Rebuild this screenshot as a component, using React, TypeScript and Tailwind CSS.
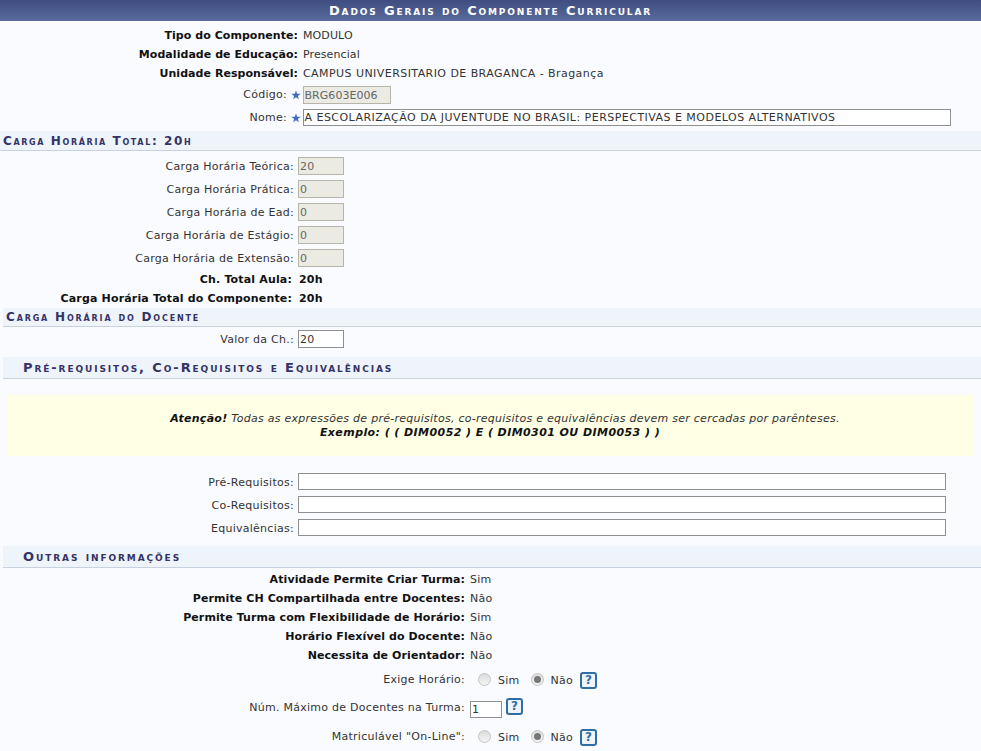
const font = "font-['DejaVu_Sans',Verdana,sans-serif]";

function Star() {
  return (
    <svg viewBox="0 0 10 10" className="w-[10px] h-[10px] shrink-0">
      <path d="M5 0.5 L6.2 3.7 L9.6 3.8 L6.9 5.9 L7.9 9.3 L5 7.3 L2.1 9.3 L3.1 5.9 L0.4 3.8 L3.8 3.7 Z" fill="#3f70c0" />
    </svg>
  );
}

function Help() {
  return (
    <span className="block w-[17px] h-[17px] border-2 border-[#2f6ea5] rounded-[3px] bg-[#eef4fa] text-[#2f6ea5] text-[12px] font-bold leading-[13px] text-center">
      ?
    </span>
  );
}

function Radio({ checked }: { checked?: boolean }) {
  return (
    <span className="w-[13px] h-[13px] rounded-full border border-[#c4c4c4] bg-gradient-to-b from-[#dcdcdc] to-[#f4f4f4] flex items-center justify-center shrink-0">
      {checked && <span className="w-[7px] h-[7px] rounded-full bg-[#777777]" />}
    </span>
  );
}

function Section({ title, className }: { title: string; className: string }) {
  return (
    <div className={`bg-[#eff3fa] border-b border-[#c8d1e0] flex items-center font-bold text-[#333366] [font-variant:small-caps] ${className}`}>
      {title}
    </div>
  );
}

function InfoRow({ label, value, wide }: { label: string; value: string; wide?: boolean }) {
  return (
    <div className="flex h-[19px] items-center pt-[2px]">
      <div className="w-[298px] text-right font-bold text-[#111111] tracking-[0.05px]">{label}</div>
      <div className={wide ? "ml-[5px] tracking-[0.44px]" : "ml-[5px] tracking-[0.1px]"}>{value}</div>
    </div>
  );
}

function Disabled({ value }: { value: string }) {
  return (
    <div className="w-[46px] h-[18px] border border-[#b5b5a8] bg-[#ebebe4] text-[#666666] pl-[1px] leading-[18px] tracking-[0.3px]">{value}</div>
  );
}

function HourRow({ label, value }: { label: string; value: string }) {
  return (
    <div className="flex h-[23px] items-center">
      <div className="w-[294px] text-right tracking-[0.27px] pt-[4px]">{label}</div>
      <div className="ml-[4px]"><Disabled value={value} /></div>
    </div>
  );
}

function TotalRow({ label, value }: { label: string; value: string }) {
  return (
    <div className="flex h-[19px] items-center font-bold text-[#111111] tracking-[0.16px] pt-[2px]">
      <div className="w-[292px] text-right">{label}</div>
      <div className="ml-[7px]">{value}</div>
    </div>
  );
}

function TextRow({ label }: { label: string }) {
  return (
    <div className="flex h-[23px] items-center">
      <div className="w-[294px] text-right tracking-[0.27px] pt-[3px]">{label}</div>
      <div className="ml-[4px] w-[648px] h-[17px] border border-[#8f8f8f] bg-white" />
    </div>
  );
}

function OtherRow({ label, value }: { label: string; value: string }) {
  return (
    <div className="flex h-[19px] items-center pt-[2px]">
      <div className="w-[465px] text-right font-bold text-[#111111] tracking-[0.1px]">{label}</div>
      <div className="ml-[5px] tracking-[0.27px]">{value}</div>
    </div>
  );
}

function RadioRow({ label, className }: { label: string; className: string }) {
  return (
    <div className={`flex items-center tracking-[0.27px] ${className}`}>
      <div className="w-[465px] text-right pt-[1px]">{label}</div>
      <div className="ml-[13px]"><Radio /></div>
      <span className="ml-[7px] mt-[4px]">Sim</span>
      <div className="ml-[11px]"><Radio checked /></div>
      <span className="ml-[7px] mt-[4px]">Não</span>
      <div className="ml-[7px] mt-[1px]"><Help /></div>
    </div>
  );
}

export default function App() {
  return (
    <div className={`${font} w-[981px] h-[751px] overflow-hidden bg-[#fafbff] text-[11px] text-[#333333]`}>
      <div className="h-[21px] bg-gradient-to-b from-[#3f4d80] to-[#5a6a9c] text-white font-bold text-[13px] tracking-[1.85px] [font-variant:small-caps] flex items-center justify-center">
        Dados Gerais do Componente Curricular
      </div>

      <div className="pt-[5px]">
        <InfoRow label="Tipo do Componente:" value="MODULO" />
        <InfoRow label="Modalidade de Educação:" value="Presencial" />
        <InfoRow label="Unidade Responsável:" value="CAMPUS UNIVERSITARIO DE BRAGANCA - Bragança" wide />
        <div className="flex h-[23px] items-center">
          <div className="w-[287px] text-right tracking-[0.27px] pt-[2px]">Código:</div>
          <div className="ml-[4px]"><Star /></div>
          <div className="ml-[2px] w-[88px] h-[18px] border border-[#b5b5a8] bg-[#ebebe4] text-[#666666] pl-[0.5px] leading-[17px] tracking-[0.05px]">BRG603E006</div>
        </div>
        <div className="flex h-[23px] items-center">
          <div className="w-[287px] text-right tracking-[0.27px] pt-[2px]">Nome:</div>
          <div className="ml-[4px]"><Star /></div>
          <div className="ml-[2px] w-[648px] h-[17px] border border-[#8f8f8f] bg-white pl-[0.5px] leading-[16px] tracking-[0.47px]">A ESCOLARIZAÇÃO DA JUVENTUDE NO BRASIL: PERSPECTIVAS E MODELOS ALTERNATIVOS</div>
        </div>
      </div>

      <Section title="Carga Horária Total: 20h" className="h-[20px] mt-[2px] pl-[3px] text-[12px] tracking-[1.63px]" />

      <div className="pt-[3px]">
        <HourRow label="Carga Horária Teórica:" value="20" />
        <HourRow label="Carga Horária Prática:" value="0" />
        <HourRow label="Carga Horária de Ead:" value="0" />
        <HourRow label="Carga Horária de Estágio:" value="0" />
        <HourRow label="Carga Horária de Extensão:" value="0" />
        <div className="mt-[1px]">
          <TotalRow label="Ch. Total Aula:" value="20h" />
          <TotalRow label="Carga Horária Total do Componente:" value="20h" />
        </div>
      </div>

      <Section title="Carga Horária do Docente" className="h-[19px] ml-[3px] pl-[3px] text-[12px] tracking-[1.83px]" />

      <div className="flex h-[23px] items-center">
        <div className="w-[294px] text-right tracking-[0.27px] pt-[3px]">Valor da Ch.:</div>
        <div className="ml-[4px] w-[46px] h-[18px] border border-[#8f8f8f] bg-white pl-[1px] leading-[17px] tracking-[0.3px]">20</div>
      </div>

      <Section title="Pré-requisitos, Co-Requisitos e Equivalências" className="h-[22px] mt-[7px] ml-[3px] pl-[20px] text-[13px] tracking-[1.9px]" />

      <div className="h-[61px] mt-[16px] mx-[7px] bg-[#ffffe5] flex flex-col items-center justify-center italic text-[#333333] leading-[14px] pr-[1px]">
        <p className="tracking-[0.26px] pl-[30px]"><b className="text-[#111111]">Atenção!</b> Todas as expressões de pré-requisitos, co-requisitos e equivalências devem ser cercadas por parênteses.</p>
        <p className="font-bold text-[#111111] tracking-[0.42px]">Exemplo: ( ( DIM0052 ) E ( DIM0301 OU DIM0053 ) )</p>
      </div>

      <div className="pt-[14px]">
        <TextRow label="Pré-Requisitos:" />
        <TextRow label="Co-Requisitos:" />
        <TextRow label="Equivalências:" />
      </div>

      <Section title="Outras informações" className="h-[22px] mt-[7px] ml-[3px] pl-[20px] text-[13px] tracking-[1.9px]" />

      <div className="pt-[2px]">
        <OtherRow label="Atividade Permite Criar Turma:" value="Sim" />
        <OtherRow label="Permite CH Compartilhada entre Docentes:" value="Não" />
        <OtherRow label="Permite Turma com Flexibilidade de Horário:" value="Sim" />
        <OtherRow label="Horário Flexível do Docente:" value="Não" />
        <OtherRow label="Necessita de Orientador:" value="Não" />
      </div>

      <RadioRow label="Exige Horário:" className="h-[29px]" />
      <div className="flex h-[23px] items-center tracking-[0.27px] mt-[2px]">
        <div className="w-[465px] text-right pt-[1px]">Núm. Máximo de Docentes na Turma:</div>
        <div className="ml-[5px] w-[32px] h-[17px] border border-[#8f8f8f] bg-white pl-[1px] leading-[16px] mt-[4px]">1</div>
        <div className="ml-[4px] -mt-[2px]"><Help /></div>
      </div>
      <RadioRow label={'Matriculável "On-Line":'} className="h-[35px]" />
    </div>
  );
}
